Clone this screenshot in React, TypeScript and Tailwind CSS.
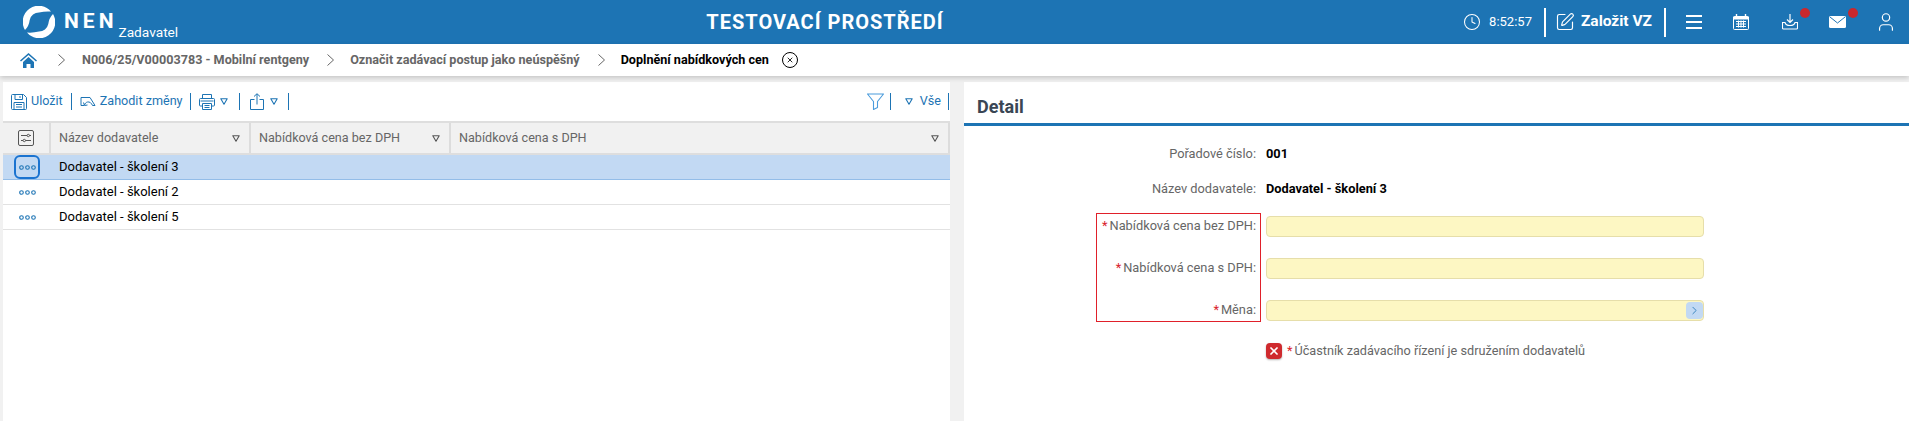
import { ChevronRight, Clock, SquarePen, User, X } from 'lucide-react'

function Caret({ className = '' }: { className?: string }) {
    return (
        <svg width="8" height="7" viewBox="0 0 8 7" className={className} fill="none" stroke="currentColor" strokeWidth="1.1">
            <path d="M.8.8h6.4L4 6.2z" strokeLinejoin="round" />
        </svg>
    )
}

function Logo() {
    const swoosh = 'M2 24A16 16 0 0 1 28 5.500Q22 5 16 6.500A9.500 9.500 0 0 0 6.700 14Q6 20 2 24Z'
    return (
        <svg width="32" height="32" viewBox="0 0 32 32" fill="#fff">
            <path d={swoosh} />
            <path d={swoosh} transform="rotate(180 16 16)" />
        </svg>
    )
}

function Sep({ className }: { className: string }) {
    return <span className={`h-[17px] w-px bg-[#1d74b4] ${className}`} />
}

function Chevron({ className }: { className: string }) {
    return (
        <svg width="7" height="12" viewBox="0 0 7 12" fill="none" stroke="#666" strokeWidth="1" className={className}>
            <path d="M.5.5L6.5 6 .5 11.5" />
        </svg>
    )
}

function Dots() {
    return (
        <svg width="17" height="5" viewBox="0 0 17 5" fill="none" stroke="#1d74b4" strokeWidth="1.1">
            <circle cx="2.5" cy="2.5" r="1.8" />
            <circle cx="8.5" cy="2.5" r="1.8" />
            <circle cx="14.5" cy="2.5" r="1.8" />
        </svg>
    )
}

function Row({ name, active }: { name: string; active?: boolean }) {
    return (
        <div className={`flex h-[25px] items-center border-b text-[13px] text-black ${active ? 'border-[#93bde8] bg-[#c2d9f3]' : 'border-[#e2e2e2]'}`}>
            <div className="flex w-[48px] justify-center">
                <span className={`flex h-[24px] w-[26px] items-center justify-center rounded-[6px] ${active ? 'border-2 border-[#1a73d0]' : ''}`}>
                    <Dots />
                </span>
            </div>
            <span className="pl-[8px]">{name}</span>
        </div>
    )
}

function HeadCell({ title, className }: { title: string; className: string }) {
    return (
        <div className={`flex items-center justify-between border-r-2 border-[#dcdcdc] pr-[9px] pl-[8px] ${className}`}>
            <span>{title}</span>
            <Caret className="text-[#555]" />
        </div>
    )
}

function Field({ label, select }: { label: string; select?: boolean }) {
    return (
        <div className="flex h-[42px] items-start">
            <label className="flex h-[19px] w-[292px] items-center justify-end text-[12.8px] text-[#666]">
                <span className="mr-[2px] text-[#d9232d]">*</span>
                {label}:
            </label>
            <div className="relative ml-[10px] h-[21px] w-[438px] rounded-[4px] border border-[#e6deaa] bg-[#fdf7c3]">
                {select && (
                    <span className="absolute top-[1px] right-0 flex h-[17px] w-[17px] items-center justify-center rounded-[4px] bg-[#c2d9f3]">
                        <ChevronRight size={13} strokeWidth={1.5} className="text-[#1d74b4]" />
                    </span>
                )}
            </div>
        </div>
    )
}

export default function App() {
    return (
        <main className="flex h-[421px] w-full flex-col overflow-hidden bg-[#f1f1f1] font-['Roboto',sans-serif]">
            {/* Header */}
            <header className="flex h-[44px] items-center bg-[#1d74b4] text-white">
                <div className="flex w-[420px] items-center pl-[23px]">
                    <Logo />
                    <span className="ml-[9px] text-[21px] leading-none font-bold tracking-[4px]">NEN</span>
                    <span className="mt-[21px] ml-[1px] text-[13.7px] leading-none">Zadavatel</span>
                </div>
                <div className="flex-1 text-center text-[20px] font-bold tracking-[1px]">TESTOVACÍ PROSTŘEDÍ</div>
                <div className="flex w-[679px] items-center justify-end pr-[12px]">
                    <Clock size={18} strokeWidth={1.4} />
                    <span className="ml-[8px] text-[13px]">8:52:57</span>
                    <span className="ml-[12px] h-[29px] w-[2px] bg-white" />
                    <SquarePen size={20} strokeWidth={1.4} className="ml-[9px]" />
                    <span className="ml-[6px] text-[15.5px] font-bold whitespace-nowrap">Založit VZ</span>
                    <span className="ml-[12px] h-[29px] w-[2px] bg-white" />
                    <svg width="16" height="14" viewBox="0 0 16 14" fill="#fff" className="ml-[20px]">
                        <rect width="16" height="2" />
                        <rect y="6" width="16" height="2" />
                        <rect y="12" width="16" height="2" />
                    </svg>
                    <svg width="16" height="16" viewBox="0 0 16 16" fill="none" stroke="#fff" className="ml-[31px]">
                        <rect x="0.5" y="2.5" width="15" height="13" rx="1" />
                        <path d="M3.5 0v4M12.5 0v4" strokeWidth="1.4" />
                        <path d="M.5 3h15v2H.5z" fill="#fff" />
                        <path d="M3 7.5h10M3 10h10M3 12.5h10M5.5 6.5v7M8 6.5v7M10.5 6.5v7" strokeWidth="1" />
                    </svg>
                    <span className="relative ml-[33px]">
                        <svg width="16" height="16" viewBox="0 0 16 16" fill="none" stroke="#fff" className="block">
                            <path d="M8 0v8M5 5.5L8 8.5l3-3" strokeWidth="1.2" />
                            <path d="M.5 8.5H3c.5 2 2 3 5 3s4.5-1 5-3h2.5V14a1 1 0 0 1-1 1h-13a1 1 0 0 1-1-1z" strokeWidth="1.1" />
                        </svg>
                        <span className="absolute -top-[6px] left-[18px] h-[10px] w-[10px] rounded-full bg-[#c9282d]" />
                    </span>
                    <span className="relative ml-[31px]">
                        <svg width="17" height="12" viewBox="0 0 17 12" className="block">
                            <rect width="17" height="12" rx="1.5" fill="#fff" />
                            <path d="M1 1l7.5 6L16 1" fill="none" stroke="#1d74b4" strokeWidth="1" />
                        </svg>
                        <span className="absolute -top-[8px] left-[19px] h-[10px] w-[10px] rounded-full bg-[#c9282d]" />
                    </span>
                    <User size={22} strokeWidth={1.3} className="ml-[29px]" />
                </div>
            </header>

            {/* Breadcrumb */}
            <nav className="z-10 flex h-[32px] items-center bg-white pl-[20px] text-[12.6px] font-bold text-[#666] shadow-[0_2px_5px_rgba(0,0,0,0.18)]">
                <svg width="17" height="15" viewBox="0 0 17 15" fill="#1d74b4">
                    <path d="M8.5 0L0 7.5l1 1L8.5 2l7.5 6.5 1-1z" />
                    <path d="M3 9l5.5-5L14 9v6h-3.5v-4h-4v4H3z" />
                </svg>
                <Chevron className="mr-[17px] ml-[21px]" />
                <span>N006/25/V00003783 - Mobilní rentgeny</span>
                <Chevron className="mr-[16px] ml-[18px]" />
                <span>Označit zadávací postup jako neúspěšný</span>
                <Chevron className="mr-[16px] ml-[18px]" />
                <span className="text-black">Doplnění nabídkových cen</span>
                <span className="ml-[13px] flex h-[16px] w-[16px] items-center justify-center rounded-full border border-black text-black">
                    <X size={8} strokeWidth={2.5} />
                </span>
            </nav>

            <div className="flex flex-1 pt-[6px] pl-[3px]">
                {/* Left panel */}
                <section className="w-[947px] bg-white">
                    <div className="flex h-[39px] items-center pl-[8px] text-[12.6px] text-[#1d74b4]">
                        <svg width="16" height="16" viewBox="0 0 16 16" fill="none" stroke="currentColor" strokeWidth="1">
                            <path d="M.5 1.5a1 1 0 0 1 1-1h11l3 3v11a1 1 0 0 1-1 1h-13a1 1 0 0 1-1-1z" />
                            <path d="M4 .5v5h7.5v-5M9 2v2M3 15.5v-7h10v7M5 10.5h6M5 13h6" />
                        </svg>
                        <span className="ml-[4px]">Uložit</span>
                        <Sep className="ml-[8px]" />
                        <svg width="16" height="11" viewBox="0 0 16 11" fill="none" stroke="currentColor" strokeWidth="1" className="ml-[8px]">
                            <path d="M4 9.5H1V1.500h9l5 8h-2.500C11.500 7 9.500 5.500 7.500 6 6 6.300 5 7.500 4.500 9" />
                            <path d="M3.5 6.5l1 3 3-.5" />
                        </svg>
                        <span className="ml-[4px] whitespace-nowrap">Zahodit změny</span>
                        <Sep className="ml-[7px]" />
                        <svg width="16" height="16" viewBox="0 0 16 16" fill="none" stroke="currentColor" strokeWidth="1" className="ml-[8px]">
                            <path d="M3.5 4.5v-4h9v4" />
                            <path d="M3.5 12h-2a1 1 0 0 1-1-1V5.500a1 1 0 0 1 1-1h13a1 1 0 0 1 1 1V11a1 1 0 0 1-1 1h-2" />
                            <path d="M3.5 9.5h9v6h-9zM1.5 7h13M5.5 11.5h5M5.5 13.5h5" />
                        </svg>
                        <Caret className="ml-[5px]" />
                        <Sep className="ml-[11px]" />
                        <svg width="14" height="17" viewBox="0 0 14 17" fill="none" stroke="currentColor" strokeWidth="1" className="ml-[10px]">
                            <path d="M4.5 6.5H.5v10h13v-10h-4M7 11.5V1M4 3.5L7 .7l3 2.8" />
                        </svg>
                        <Caret className="ml-[6px]" />
                        <Sep className="ml-[10px]" />
                        <div className="flex-1" />
                        <svg width="17" height="17" viewBox="0 0 17 17" fill="none" stroke="#4a9bdc" strokeWidth="1.1">
                            <path d="M.5 1h16l-6 7.500v6l-4 2V8.500z" strokeLinejoin="round" />
                        </svg>
                        <Sep className="ml-[6px]" />
                        <Caret className="ml-[14px]" />
                        <span className="ml-[7px]">Vše</span>
                        <Sep className="mr-[1px] ml-[7px]" />
                    </div>
                    <div className="flex h-[34px] border-y-2 border-[#dedede] bg-[#f1f1f1] text-[12.6px] text-[#666]">
                        <div className="flex w-[48px] items-center justify-center border-r-2 border-[#dcdcdc]">
                            <svg width="16" height="16" viewBox="0 0 16 16" fill="none" stroke="#555" strokeWidth="1">
                                <rect x="0.5" y="0.5" width="15" height="15" rx="1.5" />
                                <path d="M3 5.5h6M11.5 5.5H13M3 10.5h2M7.5 10.5H13" />
                                <circle cx="10.3" cy="5.5" r="1.2" />
                                <circle cx="6.3" cy="10.5" r="1.2" />
                            </svg>
                        </div>
                        <HeadCell title="Název dodavatele" className="w-[200px]" />
                        <HeadCell title="Nabídková cena bez DPH" className="w-[200px]" />
                        <HeadCell title="Nabídková cena s DPH" className="flex-1" />
                    </div>
                    <Row name="Dodavatel - školení 3" active />
                    <Row name="Dodavatel - školení 2" />
                    <Row name="Dodavatel - školení 5" />
                </section>

                {/* Detail */}
                <section className="ml-[14px] flex-1 bg-white">
                    <h2 className="h-[44px] border-b-[3px] border-[#1d74b4] pt-[13px] pl-[13px] text-[18px] leading-[24px] font-bold text-[#3a4654]">Detail</h2>
                    <div className="relative pt-[18px]">
                        <div className="flex h-[35px]">
                            <span className="w-[292px] text-right text-[12.8px] leading-[20px] text-[#666]">Pořadové číslo:</span>
                            <span className="ml-[10px] text-[12.8px] leading-[20px] font-bold text-black">001</span>
                        </div>
                        <div className="flex h-[37px]">
                            <span className="w-[292px] text-right text-[12.8px] leading-[20px] text-[#666]">Název dodavatele:</span>
                            <span className="ml-[10px] text-[12.8px] leading-[20px] font-bold text-black">Dodavatel - školení 3</span>
                        </div>
                        <Field label="Nabídková cena bez DPH" />
                        <Field label="Nabídková cena s DPH" />
                        <Field label="Měna" select />
                        <div className="-mt-[1px] flex items-center pl-[302px]">
                            <span className="flex h-[16px] w-[16px] items-center justify-center rounded-[4px] bg-[#cf2a2e] shadow-[0_1px_2px_rgba(0,0,0,0.3)]">
                                <X size={12} strokeWidth={3.5} className="text-white" />
                            </span>
                            <span className="ml-[5px] text-[12.7px] text-[#d9232d]">*</span>
                            <span className="ml-[2px] text-[12.7px] text-[#666]">Účastník zadávacího řízení je sdružením dodavatelů</span>
                        </div>
                        {/* Validation outline */}
                        <div className="absolute top-[87px] left-[132px] h-[109px] w-[165px] border border-[#e0202a]" />
                    </div>
                </section>
            </div>
        </main>
    )
}
